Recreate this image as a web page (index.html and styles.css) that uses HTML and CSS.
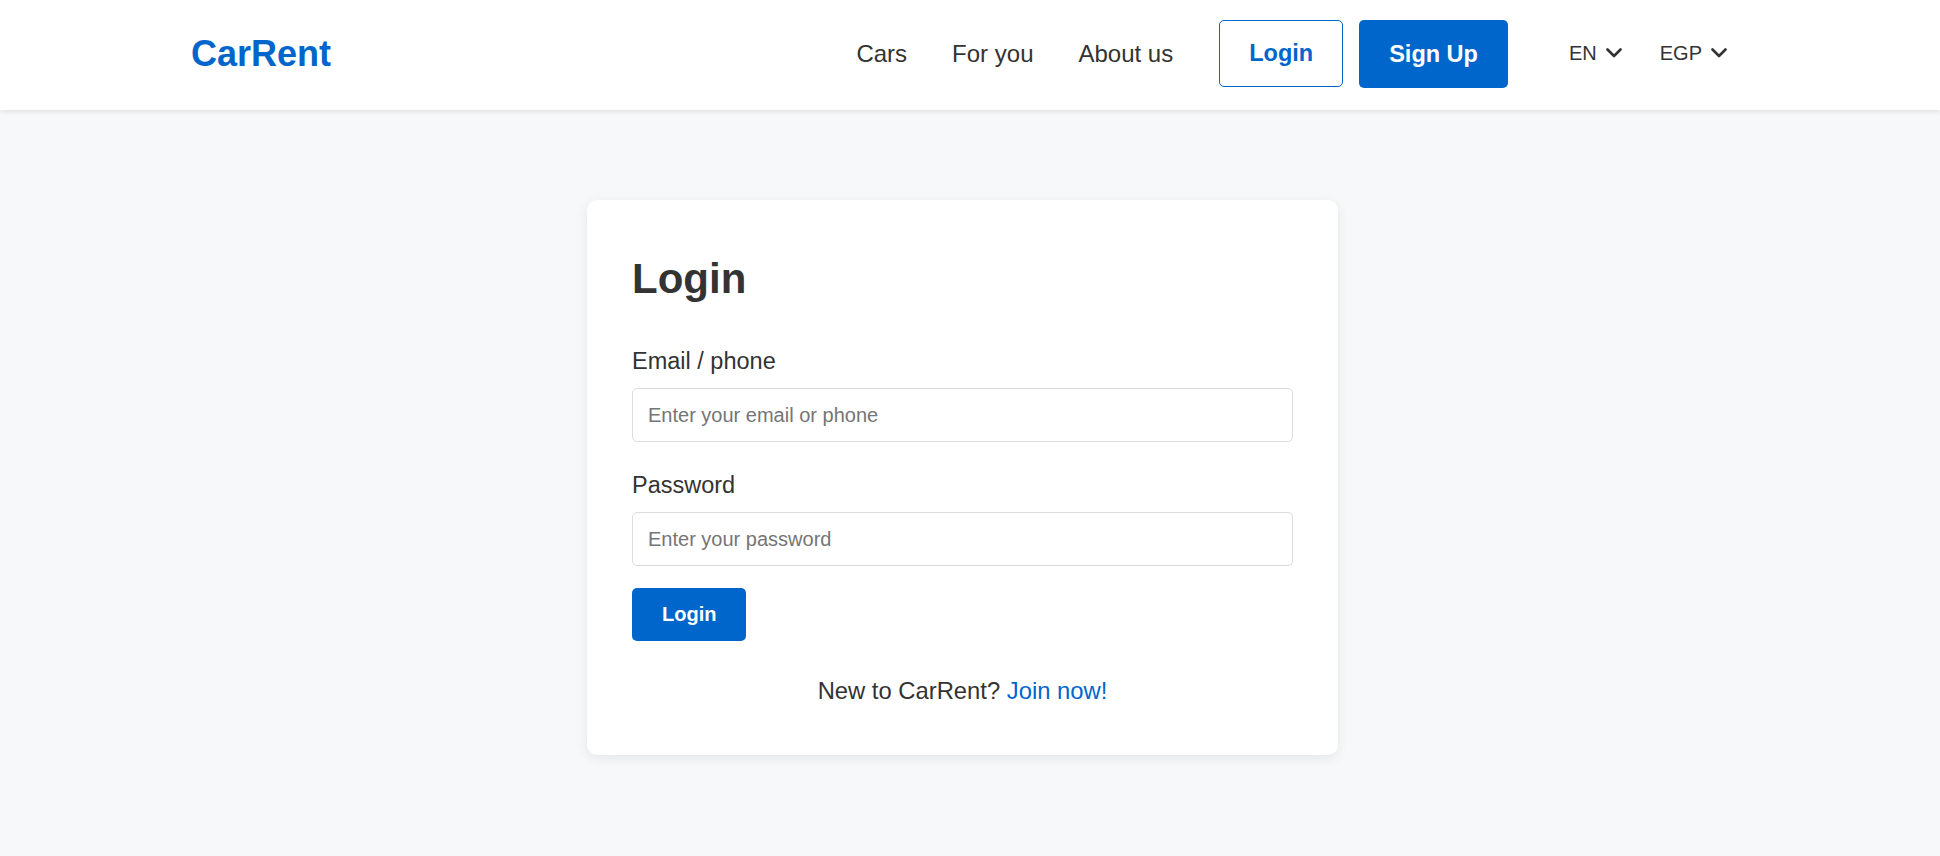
FILE: index.html
```html
<!DOCTYPE html>
<html lang="en">
<head>
<meta charset="utf-8">
<title>CarRent - Login</title>
<link rel="stylesheet" href="styles.css">
</head>
<body>
<header class="topbar">
  <a class="logo" href="#">CarRent</a>
  <nav class="links">
    <a href="#">Cars</a>
    <a href="#">For you</a>
    <a href="#">About us</a>
  </nav>
  <div class="auth">
    <a class="btn btn-outline" href="#">Login</a>
    <a class="btn btn-solid" href="#">Sign Up</a>
  </div>
  <div class="prefs">
    <span class="pref">EN <svg class="chev" viewBox="0 0 16 10" width="16" height="10"><polyline points="1.5,1.5 8,8 14.5,1.5"/></svg></span>
    <span class="pref">EGP <svg class="chev" viewBox="0 0 16 10" width="16" height="10"><polyline points="1.5,1.5 8,8 14.5,1.5"/></svg></span>
  </div>
</header>
<main class="page">
  <section class="card">
    <h1 class="title">Login</h1>
    <form class="form">
      <label class="label" for="email">Email / phone</label>
      <input class="input" id="email" type="text" placeholder="Enter your email or phone">
      <label class="label label-next" for="pass">Password</label>
      <input class="input" id="pass" type="password" placeholder="Enter your password">
      <button class="submit" type="button">Login</button>
    </form>
    <p class="footer-note">New to CarRent? <a href="#">Join now!</a></p>
  </section>
</main>
</body>
</html>
```

FILE: styles.css
```css
* { box-sizing: border-box; }
html, body { margin: 0; padding: 0; }
body {
  font-family: "Liberation Sans", Arial, sans-serif;
  background: #f7f8fa;
  color: #333;
  min-height: 856px;
}
a { text-decoration: none; }

.topbar {
  height: 110px;
  background: #fff;
  display: flex;
  align-items: center;
  padding: 0 213px 2px 191px;
  box-shadow: 0 2px 5px rgba(0, 0, 0, 0.09);
  position: relative;
}
.logo {
  font-size: 36px;
  font-weight: 700;
  color: #0066cc;
}
.links {
  margin-left: auto;
  display: flex;
  gap: 45px;
}
.links a {
  font-size: 24px;
  color: #333;
}
.auth {
  display: flex;
  gap: 16px;
  margin-left: 46px;
}
.btn {
  display: flex;
  align-items: center;
  justify-content: center;
  height: 67px;
  padding: 0 29px;
  border-radius: 5px;
  font-size: 23.5px;
  font-weight: 700;
}
.btn-outline {
  border: 1px solid #0066cc;
  color: #0066cc;
  background: #fff;
}
.btn-solid {
  background: #0066cc;
  color: #fff;
  height: 68px;
  padding: 0 30px;
}
.prefs {
  display: flex;
  gap: 38px;
  margin-left: 61px;
}
.pref {
  display: flex;
  align-items: center;
  gap: 9px;
  font-size: 20px;
  color: #333;
  position: relative;
  top: -1px;
}
.chev {
  fill: none;
  stroke: #333;
  stroke-width: 2.6;
  stroke-linecap: round;
  stroke-linejoin: round;
}

.page {
  display: flex;
  justify-content: center;
  padding: 90px 15px 0 0;
}
.card {
  width: 751px;
  background: #fff;
  border-radius: 10px;
  box-shadow: 0 3px 12px rgba(0, 0, 0, 0.08);
  padding: 55px 45px 51px;
}
.title {
  margin: 0;
  font-size: 42px;
  line-height: 48px;
  font-weight: 700;
  color: #333;
}
.form {
  display: flex;
  flex-direction: column;
  align-items: flex-start;
  margin-top: 45px;
}
.label {
  font-size: 23.5px;
  line-height: 27px;
  color: #333;
  margin-bottom: 13px;
}
.label-next { margin-top: 30px; }
.input {
  width: 100%;
  height: 54px;
  border: 1px solid #dcdcdc;
  border-radius: 5px;
  padding: 0 15px;
  font-family: "Liberation Sans", Arial, sans-serif;
  font-size: 20px;
  color: #333;
  background: #fff;
}
.input::placeholder { color: #757575; }
.submit {
  margin-top: 22px;
  height: 53px;
  padding: 0 30px;
  border: 0;
  border-radius: 5px;
  background: #0066cc;
  color: #fff;
  font-family: "Liberation Sans", Arial, sans-serif;
  font-size: 20px;
  font-weight: 700;
}
.footer-note {
  margin: 36px 0 0;
  text-align: center;
  font-size: 23.8px;
  line-height: 27px;
  color: #333;
}
.footer-note a { color: #0066cc; }
```
